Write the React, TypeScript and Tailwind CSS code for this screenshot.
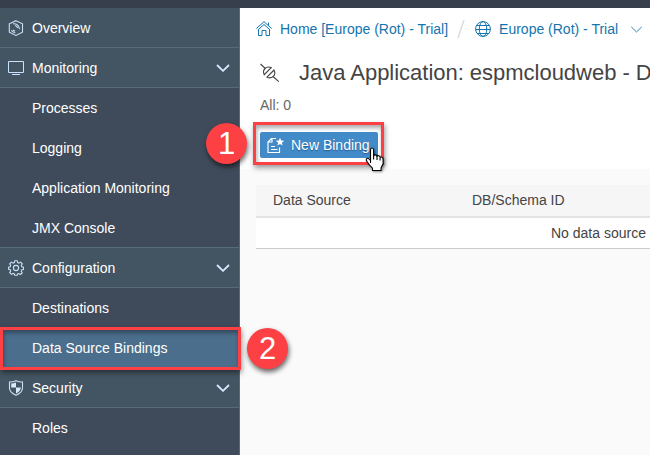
import React from "react";

type IconProps = { className?: string };

const HexIcon = () => (
  <svg className="h-4 w-4" viewBox="0 0 16 16" fill="none" stroke="#c8e2fa" strokeWidth="1.1">
    <path d="M8 .7 14.5 3.8v8.400L8 15.400 1.300 12.200V3.800Z" />
    <path d="M5 3.800Q10.800 3.500 11.500 9.300M3.300 10.200q1.200 2 4 2.600M7 5.500Q9 6 9.700 8M5 10l2 1.300" />
  </svg>
);

const MonitorIcon = () => (
  <svg className="h-4 w-4" viewBox="0 0 16 16" fill="none" stroke="#c8e2fa">
    <path d="M.5 1.5h15v11H.5ZM4 14.5h8" />
  </svg>
);

const GearIcon = () => (
  <svg className="h-4 w-4" viewBox="0 0 16 16" fill="none" stroke="#c8e2fa" strokeWidth="1.1">
    <path d="M6.8.7h2.4l.5 1.9 1.2.5 1.7-1 1.7 1.7-1 1.7.5 1.2 1.7.4v2.3l-1.8.5-.5 1.2 1 1.7-1.7 1.7-1.7-1-1.2.5-.4 1.3H6.8l-.5-1.4-1.2-.5-1.7 1-1.7-1.7 1-1.7-.5-1.2L.6 9.400V7.100l1.600-.4.500-1.200-1-1.700 1.700-1.700 1.700 1 1.200-.5Z" />
    <circle cx="8" cy="8" r="2.6" />
  </svg>
);

const ShieldIcon = () => (
  <svg className="h-4 w-4" viewBox="0 0 16 16" fill="none">
    <path d="M8 .7Q5 2.100 1.500 2v6q0 4.500 6.500 7.300Q14.500 12.500 14.500 8V2Q11 2.100 8 .7Z" stroke="#c8e2fa" strokeWidth="1.1" />
    <path d="M8 2.400v5.100H3.200V3.400Q5.500 3.500 8 2.400ZM8 7.500h4.800q0 3.700-4.800 5.900Z" fill="#d6eafa" />
  </svg>
);

const Chevron = ({ className }: IconProps) => (
  <svg className={className} viewBox="0 0 14 8" fill="none" stroke="currentColor">
    <path d="m1 1 6 5.800L13 1" />
  </svg>
);

const HomeIcon = () => (
  <svg className="h-4 w-4 shrink-0" viewBox="0 0 16 16" fill="none" stroke="#1474ae" strokeWidth="1">
    <path d="M.4 7.500 8 .7l7.600 6.800M1.800 9 8 3.500 14.200 9M2.500 8.700v5.800H6V9.500h4v5h3.500V8.700M12.500 1.500v3" />
  </svg>
);

const GlobeIcon = () => (
  <svg className="h-4 w-4 shrink-0" viewBox="0 0 16 16" fill="none" stroke="#1474ae">
    <circle cx="8" cy="8" r="7.400" />
    <ellipse cx="8" cy="8" rx="3.700" ry="7.400" />
    <path d="M1.800 4.500h12.400M.6 8.500h14.800M2 12.500h12" />
  </svg>
);

const PlugIcon = () => (
  <svg className="h-5 w-5 shrink-0" viewBox="0 0 20 20" fill="none" stroke="#444" strokeWidth="1.100">
    <path d="m.5 1 4.800 4.500M13 13.500l5.800 5.200" />
    <path d="M11.200 4.600Q7.500 3 5 5.500T4.200 11.700ZM14 7Q16 10.600 13.300 13.300T7 14.200Z" />
  </svg>
);

const NewDocIcon = () => (
  <svg className="h-[17px] w-[17px] shrink-0" viewBox="0 0 17 17" fill="none" stroke="white" strokeWidth="1.200">
    <path d="M9 1.500H4.500L1 5v10.500h11.500V10.500M5 1.500V5H1M4 9.500h4M4 12.500h6.500" />
    <path d="m13 .8 1.200 2.800 3 .2-2.300 1.900.7 2.900-2.600-1.600-2.600 1.600.7-2.900L8.800 3.800l3-.2Z" fill="white" stroke="none" />
  </svg>
);

const Pointer = ({ className }: IconProps) => (
  <svg className={className} viewBox="0 0 19 25" fill="white" stroke="black" strokeWidth="1.100" strokeLinejoin="round">
    <path d="M5.500 15.500V3Q5.500 1 7 1t1.600 2v6q.4-1.200 1.800-1.100 1.500.1 1.600 1.500.5-1 1.700-.7 1.300.2 1.400 1.500 3-.8 3 2.300v4.300l-2 4V23.500H7.500v-2.300q-3.300-3-5.700-7-1.200-2 .2-2.800 1.300-.7 3.500 2.100Z" />
    <path d="M8.600 9v3.500M12 9.500V13M15.100 10.500V13.500" />
  </svg>
);

const Section = ({ icon, label, open = true }: { icon: React.ReactNode; label: string; open?: boolean }) => (
  <div className="flex h-10 items-center border-b border-[#566c7c] bg-[#435562] pr-[9px] pl-2 text-white">
    {icon}
    <span className="ml-2 flex-1">{label}</span>
    {open && <Chevron className="h-2 w-[14px] stroke-[1.800] text-[#d4eaff]" />}
  </div>
);

const Item = ({ label, active = false }: { label: string; active?: boolean }) => (
  <div className={`flex h-10 items-center pl-8 text-white ${active ? "bg-[#4b6e8c]" : ""}`}>{label}</div>
);

const Badge = ({ className, label }: { className: string; label: string }) => (
  <div className={`absolute flex h-[41px] w-[41px] items-center justify-center rounded-full bg-[#fc4044] font-['Liberation_Sans',Arial,sans-serif] text-[31px] leading-none text-white shadow-[1px_3px_5px_#0009] ${className}`}>{label}</div>
);

export default function App() {
  return (
    <div className="relative h-[455px] w-[650px] overflow-hidden bg-[#fafafa] font-['Liberation_Sans',Arial,sans-serif] text-sm text-[#444]">
      <div className="h-2 bg-[#363f4b]" />
      <div className="flex h-[447px]">
        <nav className="w-60 shrink-0 border-r border-[#566c7c] bg-[#3f4b5a]">
          <Section icon={<HexIcon />} label="Overview" open={false} />
          <Section icon={<MonitorIcon />} label="Monitoring" />
          <Item label="Processes" />
          <Item label="Logging" />
          <Item label="Application Monitoring" />
          <div className="border-b border-[#566c7c] [&>div]:h-[39px]">
            <Item label="JMX Console" />
          </div>
          <Section icon={<GearIcon />} label="Configuration" />
          <Item label="Destinations" />
          <Item label="Data Source Bindings" active />
          <Section icon={<ShieldIcon />} label="Security" />
          <Item label="Roles" />
        </nav>
        <main className="w-[410px] overflow-hidden whitespace-nowrap">
          <header className="h-[161px] bg-white pl-4">
            <div className="flex h-[42px] items-center text-[#1474ae]">
              <HomeIcon />
              <span className="ml-2">Home [Europe (Rot) - Trial]</span>
              <svg className="ml-[9px] h-5 w-2" viewBox="0 0 8 20" stroke="#ddd" strokeWidth="1.500"><path d="M7 1 1 19" /></svg>
              <span className="ml-2.5 flex items-center gap-2"><GlobeIcon />Europe (Rot) - Trial</span>
              <Chevron className="ml-3 h-[7px] w-[13px]" />
            </div>
            <div className="flex h-[45px] items-center pl-1">
              <PlugIcon />
              <h1 className="ml-[19px] text-[22px] tracking-[-0.02px]">Java Application: espmcloudweb - D</h1>
            </div>
            <div className="h-[37px] pl-1 leading-5 text-[#666]">All: 0</div>
            <button className="ml-1 flex h-[26px] w-[118px] items-center rounded-[2px] bg-[#428ac8] pl-[7px] text-white [text-shadow:0_1px_1px_#245c91]">
              <NewDocIcon />
              <span className="ml-[7px]">New Binding</span>
            </button>
          </header>
          <section className="mt-4 ml-4">
            <div className="flex h-[33px] items-center border-b-2 border-[#e4e4e4] bg-[#f6f6f6] pb-px pl-[17px]">
              <span className="w-[199px]">Data Source</span>
              <span>DB/Schema ID</span>
            </div>
            <div className="flex h-[31px] items-center border-b border-[#ccc] bg-white pl-[295px]">No data source</div>
          </section>
        </main>
      </div>
      <div className="absolute top-[122px] left-[253px] h-[43px] w-[131px] border-[3px] border-[#fc4044] shadow-[1px_3px_5px_#0006,inset_1px_3px_4px_#0005]" />
      <div className="absolute top-[327px] left-0 h-[43px] w-[241px] border-[3px] border-[#fc4044] shadow-[1px_3px_5px_#0006,inset_1px_3px_4px_#0005]" />
      <Badge className="top-[123px] left-[206px]" label="1" />
      <Badge className="top-[328px] left-[247px]" label="2" />
      <Pointer className="absolute top-[147px] left-[365px] h-[25px] w-[19px] drop-shadow-[1px_1px_1px_#0006]" />
    </div>
  );
}
